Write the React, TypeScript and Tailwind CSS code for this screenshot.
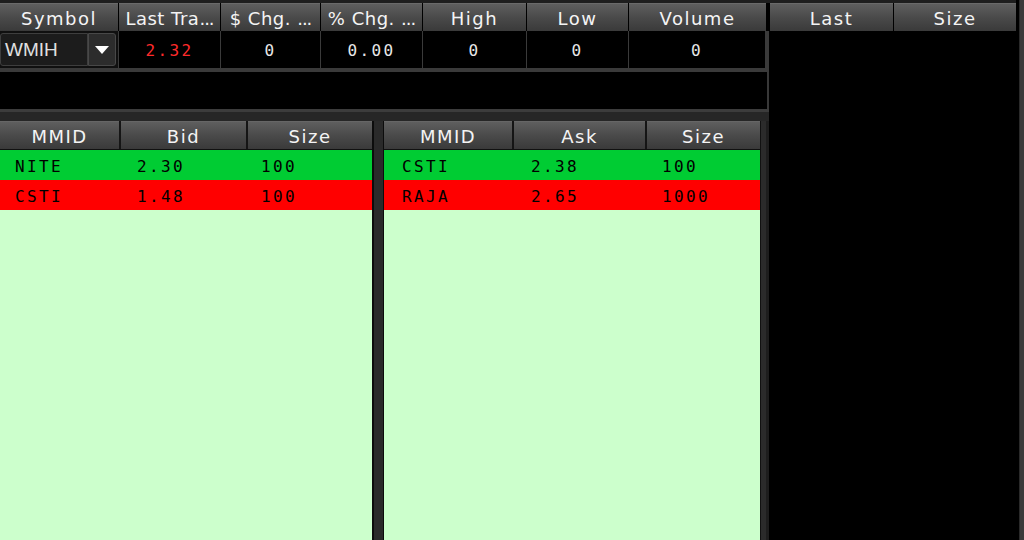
import React from "react";

const headFont = { fontFamily: '"DejaVu Sans", Verdana, sans-serif' };
const monoFont = { fontFamily: '"DejaVu Sans Mono", "Liberation Mono", monospace' };

function HeadCell({ w, children }: { w: string; children: React.ReactNode }) {
  return (
    <div
      className={`${w} h-full shrink-0 flex items-center justify-center overflow-hidden whitespace-nowrap bg-linear-to-b from-[#5e5e5e] via-[#4a4a4a] to-[#3a3a3a] border-t border-[#6a6a6a] text-[#f4f4f4] text-[18px] tracking-[1.5px] pt-[1px]`}
      style={headFont}
    >
      {children}
    </div>
  );
}

function Trunc({ text }: { text: string }) {
  return (
    <span className="whitespace-pre">
      <span className="tracking-[0.5px]">{text}</span>
      <span className="tracking-[-1px]">...</span>
    </span>
  );
}

function DataCell({ w, children, red }: { w: string; children?: React.ReactNode; red?: boolean }) {
  return (
    <div
      className={`${w} h-full shrink-0 bg-black flex items-center justify-center pt-[3px] text-[16px] tracking-[2.4px] ${red ? "text-[#ff2b2b]" : "text-[#e8e8e8]"}`}
      style={monoFont}
    >
      {children}
    </div>
  );
}

function BookHead({ w, children }: { w: string; children: React.ReactNode }) {
  return (
    <div
      className={`${w} h-full shrink-0 flex items-center justify-center pt-[1px] bg-linear-to-b from-[#5e5e5e] via-[#4a4a4a] to-[#3a3a3a] border-t border-[#666] text-[#f4f4f4] text-[18px] tracking-[1.5px]`}
      style={headFont}
    >
      {children}
    </div>
  );
}

type Row = { a: string; b: string; c: string; color: string };

function Book({
  width,
  cols,
  pads,
  heads,
  rows,
}: {
  width: string;
  cols: string[];
  pads: string[];
  heads: string[];
  rows: Row[];
}) {
  return (
    <div className={`${width} shrink-0 flex flex-col bg-[#ccffcc]`}>
      <div className="h-[28px] flex gap-[2px] bg-[#151515] shrink-0">
        {heads.map((h, i) => (
          <BookHead key={i} w={cols[i]}>
            {h}
          </BookHead>
        ))}
      </div>
      <div className="h-[1px] bg-[#111] shrink-0" />
      {rows.map((r, i) => (
        <div
          key={i}
          className={`h-[30px] flex items-center pt-[3px] shrink-0 ${r.color} text-black text-[16px] tracking-[2.4px]`}
          style={monoFont}
        >
          <div className={`${cols[0]} ${pads[0]}`}>{r.a}</div>
          <div className={`${cols[1]} ${pads[1]}`}>{r.b}</div>
          <div className={`${cols[2]} ${pads[2]}`}>{r.c}</div>
        </div>
      ))}
    </div>
  );
}

export default function App() {
  return (
    <div className="w-[1024px] h-[540px] bg-black flex overflow-hidden">
      {/* Left main area */}
      <div className="w-[769px] h-full shrink-0 flex flex-col bg-[#383838]">
        <div className="h-[3px] bg-[#1e1e1e] shrink-0" />
        {/* header row */}
        <div className="h-[28px] flex gap-[1px] bg-black shrink-0">
          <HeadCell w="w-[118px]">Symbol</HeadCell>
          <HeadCell w="w-[101px]">
            <Trunc text="Last Tra" />
          </HeadCell>
          <HeadCell w="w-[99px]">
            <Trunc text="$ Chg. " />
          </HeadCell>
          <HeadCell w="w-[101px]">
            <Trunc text="% Chg. " />
          </HeadCell>
          <HeadCell w="w-[103px]">High</HeadCell>
          <HeadCell w="w-[101px]">Low</HeadCell>
          <HeadCell w="w-[137px]">Volume</HeadCell>
        </div>
        {/* data row */}
        <div className="h-[37px] flex gap-[1px] bg-[#3a3a3a] shrink-0 pr-[2px]">
          <div className="w-[118px] h-full shrink-0 bg-[#101010] flex items-center py-[2px] pr-[2px]">
            <div
              className="w-[88px] h-[33px] bg-[#1c1c1c] border border-[#3e3e3e] rounded-l-[3px] flex items-center pl-[4px] pt-[2px] text-[#e0e0e0] text-[19px]"
              style={{ fontFamily: '"Liberation Sans", Arial, sans-serif' }}
            >
              WMIH
            </div>
            <div className="w-[28px] h-[33px] bg-[#2c2c2c] border border-[#484848] rounded-r-[3px] flex items-center justify-center">
              <svg width="14" height="8" viewBox="0 0 14 8">
                <path d="M0 0 L14 0 L7 8 Z" fill="#ffffff" />
              </svg>
            </div>
          </div>
          <DataCell w="w-[101px]" red>
            2.32
          </DataCell>
          <DataCell w="w-[99px]">0</DataCell>
          <DataCell w="w-[101px]">0.00</DataCell>
          <DataCell w="w-[103px]">0</DataCell>
          <DataCell w="w-[101px]">0</DataCell>
          <DataCell w="w-[136px]">0</DataCell>
        </div>
        <div className="h-[4px] bg-[#3a3a3a] shrink-0" />
        <div className="h-[37px] shrink-0 bg-black mr-[2px]" />
        <div className="h-[3px] bg-[#3c3c3c] shrink-0" />
        {/* books */}
        <div className="flex-1 flex bg-[#262626] pt-[9px] min-h-0">
          <Book
            width="w-[372px]"
            cols={["w-[119px]", "w-[125px]", "w-[124px]"]}
            pads={["pl-[15px]", "pl-[18px]", "pl-[17px]"]}
            heads={["MMID", "Bid", "Size"]}
            rows={[
              { a: "NITE", b: "2.30", c: "100", color: "bg-[#00cc33]" },
              { a: "CSTI", b: "1.48", c: "100", color: "bg-[#ff0000]" },
            ]}
          />
          <div className="w-[12px] shrink-0 flex">
            <div className="w-[2px] bg-[#0c0c0c]" />
            <div className="flex-1 bg-[#2a2a2a]" />
            <div className="w-[1px] bg-[#0c0c0c]" />
          </div>
          <Book
            width="w-[376px]"
            cols={["w-[128px]", "w-[131px]", "w-[113px]"]}
            pads={["pl-[18px]", "pl-[19px]", "pl-[19px]"]}
            heads={["MMID", "Ask", "Size"]}
            rows={[
              { a: "CSTI", b: "2.38", c: "100", color: "bg-[#00cc33]" },
              { a: "RAJA", b: "2.65", c: "1000", color: "bg-[#ff0000]" },
            ]}
          />
          <div className="flex-1 flex">
            <div className="w-[1px] bg-[#111]" />
            <div className="flex-1 bg-[#2b2b2b]" />
            <div className="w-[3px] bg-[#1e1e1e]" />
          </div>
        </div>
      </div>
      {/* Right panel */}
      <div className="w-[247px] h-full shrink-0 flex flex-col bg-black">
        <div className="h-[3px] bg-[#1e1e1e] shrink-0" />
        <div className="h-[28px] flex gap-[1px] bg-black shrink-0 pl-[1px]">
          <HeadCell w="w-[123px]">Last</HeadCell>
          <HeadCell w="w-[122px]">Size</HeadCell>
        </div>
        <div className="flex-1 bg-black" />
      </div>
      <div className="flex-1 h-full flex">
        <div className="w-[3px] bg-black" />
        <div className="flex-1 bg-[#3a3a3a] border-l border-[#2a2a2a]" />
      </div>
    </div>
  );
}
